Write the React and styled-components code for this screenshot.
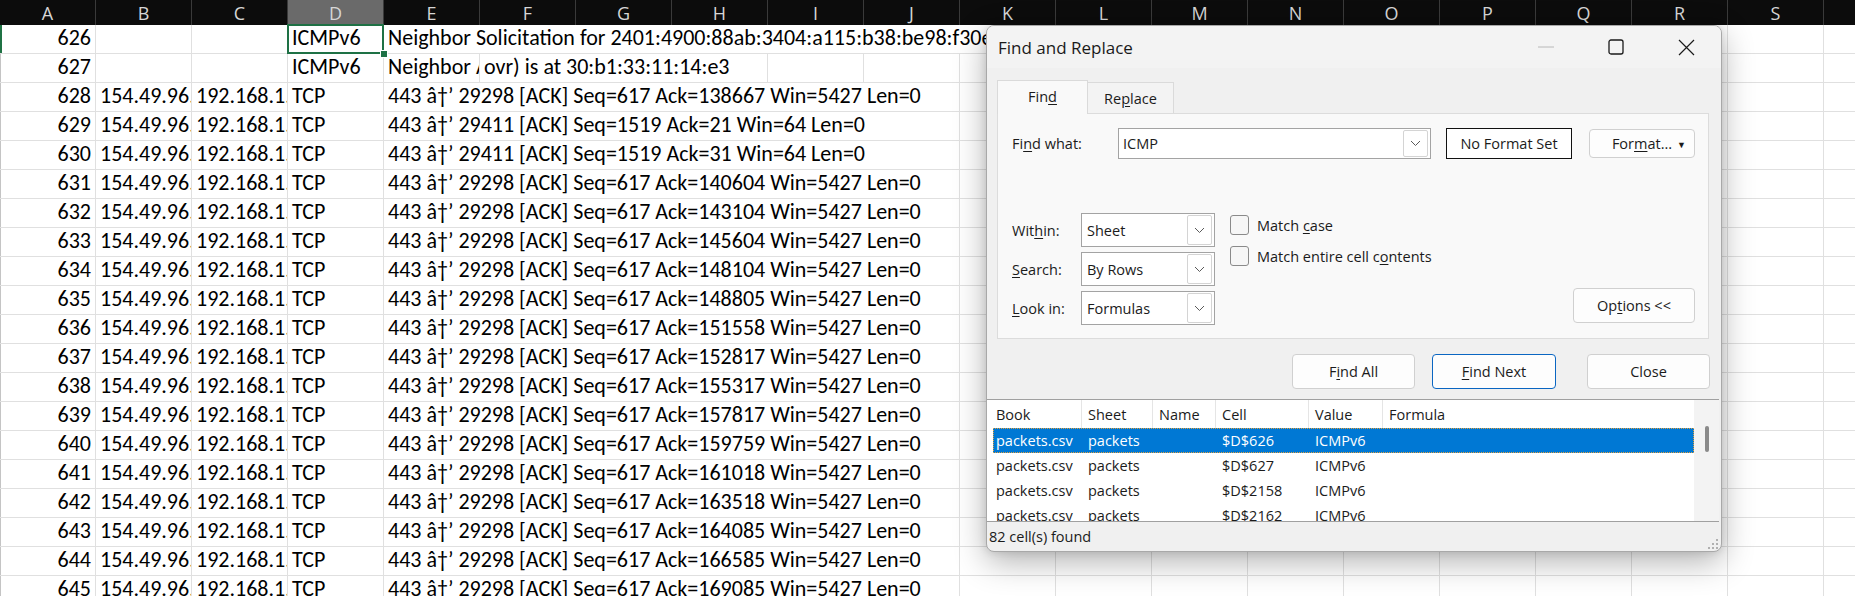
import React from 'react';
import styled, { createGlobalStyle, css } from 'styled-components';

const CELL_FONT = `"Carlito", "Lato", "Open Sans", sans-serif`;
const UI_FONT = `"Segoe UI", "Open Sans", "Noto Sans", sans-serif`;

const GlobalStyle = createGlobalStyle`
  html, body { margin: 0; padding: 0; background: #fff; }
  body { overflow: hidden; }
  #root { width: 1855px; height: 596px; }
`;

const Screen = styled.div`
  position: relative;
  width: 1855px;
  height: 596px;
  overflow: hidden;
  background: #fff;
`;

/* ---------- spreadsheet ---------- */
const Sheet = styled.div`
  display: flex;
  flex-direction: column;
`;

const ColumnHeader = styled.div`
  display: grid;
  grid-template-columns: repeat(20, 96px);
  height: 25px;
  flex-shrink: 0;
  background: #0c0c0c;
`;

const ColLetter = styled.div`
  box-sizing: border-box;
  border-right: 1px solid #3a3a3a;
  background: ${(p) => (p.$active ? '#6a6a6a' : 'transparent')};
  color: #d6d6d6;
  font: 18px/1 ${UI_FONT};
  display: flex;
  align-items: center;
  justify-content: center;
`;

const Row = styled.div`
  display: grid;
  grid-template-columns: repeat(20, 96px);
  height: 29px;
  flex-shrink: 0;
  box-shadow: inset ${(p) => (p.$current ? '2px 0 0 #1f7244' : '1px 0 0 #c4c4c4')};
`;

const Cell = styled.div`
  position: relative;
  box-sizing: border-box;
  border-right: 1px solid #e0e0e0;
  border-bottom: 1px solid #e0e0e0;
  display: flex;
  align-items: stretch;
  justify-content: ${(p) => (p.$num ? 'flex-end' : 'flex-start')};
  overflow: ${(p) => (p.$spill || p.$selected ? 'visible' : 'hidden')};
  font: 22px/22px ${CELL_FONT};
  color: #000;
  white-space: nowrap;
`;

const CellText = styled.span`
  display: flex;
  align-items: flex-end;
  flex-shrink: 0;
  padding: 0 4px 4px;
  ${(p) =>
    p.$spill &&
    css`
      position: relative;
      z-index: 1;
      background: #fff;
    `}
`;

const SelectionFrame = styled.span`
  position: absolute;
  left: -1px;
  top: -1px;
  right: -1px;
  bottom: -1px;
  border: 2px solid #1e7145;
  z-index: 3;
  pointer-events: none;
`;

const FillHandle = styled.span`
  position: absolute;
  right: -5px;
  bottom: -5px;
  width: 6px;
  height: 6px;
  background: #1e7145;
  border: 1px solid #fff;
  z-index: 4;
`;

/* ---------- dialog ---------- */
const Dialog = styled.section`
  position: absolute;
  left: 986px;
  top: 25px;
  z-index: 10;
  width: 736px;
  height: 527px;
  box-sizing: border-box;
  display: flex;
  flex-direction: column;
  background: #f0f0f0;
  border: 1px solid #a8a8a8;
  border-radius: 8px;
  box-shadow: 0 10px 32px rgba(0, 0, 0, 0.3), 0 0 8px rgba(0, 0, 0, 0.12);
  overflow: hidden;
  font: 14.5px ${UI_FONT};
  color: #1b1b1b;
`;

const TitleBar = styled.header`
  height: 42px;
  flex-shrink: 0;
  display: flex;
  align-items: center;
  background: #f3f3f3;
  padding-left: 11px;
`;

const Title = styled.div`
  flex: 1;
  font-size: 17px;
  color: #1a1a1a;
`;

const WinButton = styled.div`
  width: 70px;
  height: 42px;
  display: flex;
  align-items: center;
  justify-content: center;
`;

const Body = styled.div`
  display: flex;
  flex-direction: column;
  padding: 12px 11px 0 10px;
  flex-shrink: 0;
`;

const TabStrip = styled.div`
  display: flex;
  align-items: flex-end;
  height: 33px;
`;

const Tab = styled.div`
  box-sizing: border-box;
  width: ${(p) => p.$w}px;
  height: ${(p) => (p.$active ? 34 : 31)}px;
  margin-bottom: ${(p) => (p.$active ? '-1px' : '0')};
  display: flex;
  align-items: center;
  justify-content: center;
  background: ${(p) => (p.$active ? '#f9f9f9' : '#f3f3f3')};
  border: 1px solid #dadada;
  border-bottom: none;
  ${(p) => !p.$active && 'border-left: none;'}
  position: relative;
  z-index: ${(p) => (p.$active ? 1 : 0)};
  padding-bottom: ${(p) => (p.$active ? '2px' : '0')};
`;

const Panel = styled.div`
  box-sizing: border-box;
  width: 712px;
  height: 226px;
  background: #f9f9f9;
  border: 1px solid #dcdcdc;
  padding: 14px 13px 0 14px;
  display: flex;
  flex-direction: column;
`;

const FieldRow = styled.div`
  display: flex;
  align-items: center;
  height: 31px;
`;

const Label = styled.div`
  width: ${(p) => p.$w}px;
  flex-shrink: 0;
`;

const U = styled.span`
  text-decoration: underline;
  text-underline-offset: 2px;
  text-decoration-thickness: 1px;
`;

const Combo = styled.div`
  box-sizing: border-box;
  width: ${(p) => p.$w}px;
  height: ${(p) => p.$h}px;
  flex-shrink: 0;
  background: #fff;
  border: 1px solid #a3a3a3;
  display: flex;
  align-items: center;
  padding-left: ${(p) => p.$pl}px;
`;

const ComboValue = styled.span`
  flex: 1;
`;

const DropButton = styled.span`
  box-sizing: border-box;
  width: 25px;
  align-self: stretch;
  margin: 1px 2px 1px 0;
  border: 1px solid #d4d4d4;
  border-radius: 2px;
  display: flex;
  align-items: center;
  justify-content: center;
  background: #fff;
`;

const FormatBox = styled.div`
  box-sizing: border-box;
  width: 126px;
  height: 31px;
  margin-left: 15px;
  border: 1px solid #111;
  background: #fff;
  display: flex;
  align-items: center;
  justify-content: center;
`;

const Button = styled.div`
  box-sizing: border-box;
  width: ${(p) => p.$w}px;
  height: ${(p) => p.$h || 35}px;
  margin-left: ${(p) => p.$ml || 0}px;
  flex-shrink: 0;
  background: #fdfdfd;
  border: 1px solid ${(p) => (p.$default ? '#0a66c2' : '#d0d0d0')};
  border-radius: 4px;
  display: flex;
  align-items: center;
  justify-content: center;
  gap: ${(p) => p.$gap || 0}px;
  position: relative;
`;

const Caret = styled.span`
  position: absolute;
  right: 8px;
  top: 50%;
  transform: translateY(-50%);
  font-size: 9px;
`;

const Lower = styled.div`
  display: flex;
  margin-top: 54px;
  flex: 1;
`;

const OptionGrid = styled.div`
  display: grid;
  grid-template-columns: 69px 134px;
  grid-auto-rows: 34px;
  row-gap: 5px;
  align-items: center;
  align-content: start;
`;

const Checks = styled.div`
  display: flex;
  flex-direction: column;
  gap: 11px;
  margin-left: 15px;
  padding-top: 2px;
`;

const CheckRow = styled.div`
  display: flex;
  align-items: center;
  gap: 8px;
  height: 20px;
`;

const Box = styled.span`
  box-sizing: border-box;
  width: 19px;
  height: 20px;
  border: 1px solid #8a8a8a;
  border-radius: 3px;
  background: #f6f6f6;
`;

const OptionsSlot = styled.div`
  margin-left: auto;
  align-self: flex-end;
  margin-bottom: 15px;
`;

const ButtonRow = styled.div`
  display: flex;
  justify-content: flex-end;
  margin-top: 15px;
  height: 35px;
`;

const Results = styled.div`
  margin-top: 10px;
  margin-right: 2px;
  height: 123px;
  flex-shrink: 0;
  box-sizing: border-box;
  border-top: 1px solid #a0a0a0;
  border-bottom: 1px solid #a0a0a0;
  background: #fff;
  display: flex;
`;

const ResultsMain = styled.div`
  flex: 1;
  overflow: hidden;
  display: flex;
  flex-direction: column;
`;

const ResultsHead = styled.div`
  display: grid;
  grid-template-columns: 95px 71px 63px 93px 74px 1fr;
  height: 28px;
  flex-shrink: 0;
`;

const HeadCell = styled.div`
  display: flex;
  align-items: center;
  padding-left: ${(p) => (p.$first ? 9 : 6)}px;
  border-right: 1px solid ${(p) => (p.$last ? 'transparent' : '#e5e5e5')};
`;

const ResultRows = styled.div`
  padding-left: 6px;
`;

const ResultRow = styled.div`
  display: grid;
  grid-template-columns: 89px 71px 63px 93px 74px 1fr;
  height: 25px;
  align-items: center;
  background: ${(p) => (p.$selected ? '#0078d4' : 'transparent')};
  color: ${(p) => (p.$selected ? '#fff' : '#1b1b1b')};
  ${(p) =>
    p.$selected &&
    css`
      outline: 1px dotted #e0a040;
      outline-offset: -1px;
    `}
`;

const ResultCell = styled.div`
  padding-left: ${(p) => (p.$first ? 3 : 6)}px;
  white-space: nowrap;
`;

const ScrollTrack = styled.div`
  width: 25px;
  background: #f3f3f3;
  display: flex;
  justify-content: center;
  padding-top: 26px;
  box-sizing: border-box;
`;

const ScrollThumb = styled.div`
  width: 4px;
  height: 26px;
  border-radius: 2px;
  background: #8a8a8a;
`;

const StatusBar = styled.footer`
  flex: 1;
  display: flex;
  align-items: center;
  padding-left: 2px;
  padding-right: 2px;
`;

const Grip = styled.svg`
  margin-left: auto;
  align-self: flex-end;
  margin-bottom: 1px;
`;

/* ---------- icons ---------- */
const Chevron = () => (
  <svg width="11" height="7" viewBox="0 0 11 7">
    <polyline points="1,1 5.5,5.5 10,1" fill="none" stroke="#5a5a5a" strokeWidth="1" />
  </svg>
);

/* ---------- data ---------- */
const ARROW = '\u00e2\u2020\u2019';
const tcpRows = [
  [628, 29298, 617, 138667, 5427],
  [629, 29411, 1519, 21, 64],
  [630, 29411, 1519, 31, 64],
  [631, 29298, 617, 140604, 5427],
  [632, 29298, 617, 143104, 5427],
  [633, 29298, 617, 145604, 5427],
  [634, 29298, 617, 148104, 5427],
  [635, 29298, 617, 148805, 5427],
  [636, 29298, 617, 151558, 5427],
  [637, 29298, 617, 152817, 5427],
  [638, 29298, 617, 155317, 5427],
  [639, 29298, 617, 157817, 5427],
  [640, 29298, 617, 159759, 5427],
  [641, 29298, 617, 161018, 5427],
  [642, 29298, 617, 163518, 5427],
  [643, 29298, 617, 164085, 5427],
  [644, 29298, 617, 166585, 5427],
  [645, 29298, 617, 169085, 5427],
];

const rows = [
  {
    a: 626,
    d: 'ICMPv6',
    e: 'Neighbor Solicitation for 2401:4900:88ab:3404:a115:b38:be98:f30e from 30:b1:33',
    current: true,
  },
  {
    a: 627,
    d: 'ICMPv6',
    e: 'Neighbor Advertisement fe80::32b1:33ff:fe11:14e3 (rtr',
    f: 'ovr) is at 30:b1:33:11:14:e3',
  },
  ...tcpRows.map(([a, port, seq, ack, win]) => ({
    a,
    b: '154.49.96.183',
    c: '192.168.1.10',
    d: 'TCP',
    e: `443 ${ARROW} ${port} [ACK] Seq=${seq} Ack=${ack} Win=${win} Len=0`,
  })),
];

const letters = 'ABCDEFGHIJKLMNOPQRST'.split('');

const results = [
  ['packets.csv', 'packets', '', '$D$626', 'ICMPv6', ''],
  ['packets.csv', 'packets', '', '$D$627', 'ICMPv6', ''],
  ['packets.csv', 'packets', '', '$D$2158', 'ICMPv6', ''],
  ['packets.csv', 'packets', '', '$D$2162', 'ICMPv6', ''],
];

function SheetRow({ r }) {
  const empties = Array.from({ length: r.f ? 14 : 15 });
  return (
    <Row $current={r.current}>
      <Cell $num>
        <CellText>{r.a}</CellText>
      </Cell>
      <Cell>{r.b && <CellText>{r.b}</CellText>}</Cell>
      <Cell>{r.c && <CellText>{r.c}</CellText>}</Cell>
      <Cell $selected={r.current}>
        <CellText>{r.d}</CellText>
        {r.current && (
          <>
            <SelectionFrame />
            <FillHandle />
          </>
        )}
      </Cell>
      <Cell $spill={!r.f}>
        <CellText $spill={!r.f}>{r.e}</CellText>
      </Cell>
      {r.f && (
        <Cell $spill>
          <CellText $spill>{r.f}</CellText>
        </Cell>
      )}
      {empties.map((_, i) => (
        <Cell key={i} />
      ))}
    </Row>
  );
}

function FindReplaceDialog() {
  return (
    <Dialog>
      <TitleBar>
        <Title>Find and Replace</Title>
        <WinButton>
          <svg width="16" height="2" viewBox="0 0 16 2">
            <line x1="0" y1="1" x2="16" y2="1" stroke="#b8b8b8" strokeWidth="1" />
          </svg>
        </WinButton>
        <WinButton>
          <svg width="16" height="16" viewBox="0 0 16 16">
            <rect x="1" y="1" width="14" height="14" rx="2" fill="none" stroke="#1a1a1a" strokeWidth="1.3" />
          </svg>
        </WinButton>
        <WinButton>
          <svg width="17" height="17" viewBox="0 0 17 17">
            <path d="M1 1 L16 16 M16 1 L1 16" stroke="#1a1a1a" strokeWidth="1.2" />
          </svg>
        </WinButton>
      </TitleBar>

      <Body>
        <TabStrip>
          <Tab $active $w={91}>
            <span>
              Fin<U>d</U>
            </span>
          </Tab>
          <Tab $w={86}>
            <span>
              Re<U>p</U>lace
            </span>
          </Tab>
        </TabStrip>
        <Panel>
          <FieldRow>
            <Label $w={106}>
              Fi<U>n</U>d what:
            </Label>
            <Combo $w={313} $h={31} $pl={4}>
              <ComboValue>ICMP</ComboValue>
              <DropButton>
                <Chevron />
              </DropButton>
            </Combo>
            <FormatBox>No Format Set</FormatBox>
            <Button $w={106} $h={29} $ml={17}>
              <span>
                For<U>m</U>at...
              </span>
              <Caret>▼</Caret>
            </Button>
          </FieldRow>

          <Lower>
            <OptionGrid>
              <Label>
                Wit<U>h</U>in:
              </Label>
              <Combo $w={134} $h={34} $pl={5}>
                <ComboValue>Sheet</ComboValue>
                <DropButton>
                  <Chevron />
                </DropButton>
              </Combo>
              <Label>
                <U>S</U>earch:
              </Label>
              <Combo $w={134} $h={34} $pl={5}>
                <ComboValue>By Rows</ComboValue>
                <DropButton>
                  <Chevron />
                </DropButton>
              </Combo>
              <Label>
                <U>L</U>ook in:
              </Label>
              <Combo $w={134} $h={34} $pl={5}>
                <ComboValue>Formulas</ComboValue>
                <DropButton>
                  <Chevron />
                </DropButton>
              </Combo>
            </OptionGrid>
            <Checks>
              <CheckRow>
                <Box />
                <span>
                  Match <U>c</U>ase
                </span>
              </CheckRow>
              <CheckRow>
                <Box />
                <span>
                  Match entire cell c<U>o</U>ntents
                </span>
              </CheckRow>
            </Checks>
            <OptionsSlot>
              <Button $w={122} $h={35}>
                <span>
                  Op<U>t</U>ions &lt;&lt;
                </span>
              </Button>
            </OptionsSlot>
          </Lower>
        </Panel>

        <ButtonRow>
          <Button $w={123}>
            <span>
              F<U>i</U>nd All
            </span>
          </Button>
          <Button $w={124} $ml={17} $default>
            <span>
              <U>F</U>ind Next
            </span>
          </Button>
          <Button $w={123} $ml={31}>
            Close
          </Button>
        </ButtonRow>
      </Body>

      <Results>
        <ResultsMain>
          <ResultsHead>
            <HeadCell $first>Book</HeadCell>
            <HeadCell>Sheet</HeadCell>
            <HeadCell>Name</HeadCell>
            <HeadCell>Cell</HeadCell>
            <HeadCell>Value</HeadCell>
            <HeadCell $last>Formula</HeadCell>
          </ResultsHead>
          <ResultRows>
            {results.map((r, i) => (
              <ResultRow key={i} $selected={i === 0}>
                {r.map((v, j) => (
                  <ResultCell key={j} $first={j === 0}>
                    {v}
                  </ResultCell>
                ))}
              </ResultRow>
            ))}
          </ResultRows>
        </ResultsMain>
        <ScrollTrack>
          <ScrollThumb />
        </ScrollTrack>
      </Results>

      <StatusBar>
        <span>82 cell(s) found</span>
        <Grip width="13" height="11" viewBox="0 0 13 11">
          <g fill="#b0b0b0">
            <rect x="10" y="0" width="2" height="2" />
            <rect x="6" y="4" width="2" height="2" />
            <rect x="10" y="4" width="2" height="2" />
            <rect x="2" y="8" width="2" height="2" />
            <rect x="6" y="8" width="2" height="2" />
            <rect x="10" y="8" width="2" height="2" />
          </g>
        </Grip>
      </StatusBar>
    </Dialog>
  );
}

export default function App() {
  return (
    <Screen>
      <GlobalStyle />
      <Sheet>
        <ColumnHeader>
          {letters.map((l) => (
            <ColLetter key={l} $active={l === 'D'}>
              {l}
            </ColLetter>
          ))}
        </ColumnHeader>
        {rows.map((r) => (
          <SheetRow key={r.a} r={r} />
        ))}
      </Sheet>
      <FindReplaceDialog />
    </Screen>
  );
}
